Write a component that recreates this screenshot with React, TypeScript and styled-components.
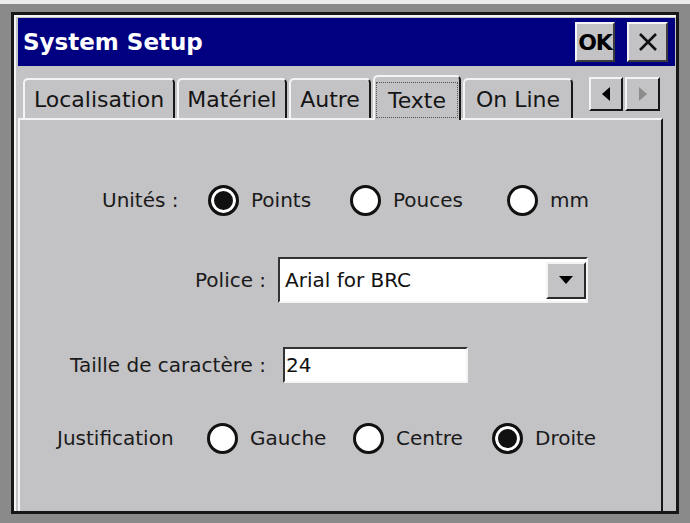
import React from "react";
import styled, { createGlobalStyle } from "styled-components";

const GlobalStyle = createGlobalStyle`
  html, body {
    margin: 0;
    padding: 0;
  }
  body {
    background: #8a8a8a;
    font-family: "DejaVu Sans", "Noto Sans", sans-serif;
  }
`;

const FACE = "#c3c2c5";
const LIGHT = "#f4f4f4";
const DARK = "#171717";

const Page = styled.div`
  width: 690px;
  height: 523px;
  box-sizing: border-box;
  border-top: 4px solid #ececec;
  padding: 8px 11px 0 11px;
`;

const Window = styled.div`
  width: 668px;
  height: 502px;
  box-sizing: border-box;
  border: 3px solid ${DARK};
  box-shadow: inset 2px 2px 0 ${LIGHT};
  background: ${FACE};
  padding: 3px 1px 0 4px;
  display: flex;
  flex-direction: column;
`;

const TitleBar = styled.div`
  height: 48px;
  flex: none;
  background: #000080;
  display: flex;
  align-items: center;
  gap: 12px;
  padding: 0 7px 0 5px;
`;

const Title = styled.div`
  flex: 1;
  color: #ffffff;
  font-weight: bold;
  font-size: 23px;
`;

const TitleButton = styled.button<{ $w: number }>`
  width: ${(p) => p.$w}px;
  height: 40px;
  box-sizing: border-box;
  padding: 0;
  background: ${FACE};
  border: 2px solid;
  border-color: ${LIGHT} #3c3c3c #3c3c3c ${LIGHT};
  display: flex;
  align-items: center;
  justify-content: center;
  font-family: inherit;
  font-weight: bold;
  font-size: 22px;
  letter-spacing: -1px;
  color: #000;
`;

const TabStrip = styled.div`
  height: 52px;
  width: 645px;
  flex: none;
  box-sizing: border-box;
  display: flex;
  align-items: flex-end;
  gap: 2px;
  padding: 0 3px 0 5px;
`;

const Tab = styled.div<{ $w: number; $active?: boolean }>`
  width: ${(p) => p.$w}px;
  height: ${(p) => (p.$active ? 45 : 40)}px;
  margin-bottom: ${(p) => (p.$active ? -2 : 0)}px;
  position: ${(p) => (p.$active ? "relative" : "static")};
  z-index: ${(p) => (p.$active ? 1 : "auto")};
  flex: none;
  box-sizing: border-box;
  background: ${FACE};
  border-top: 2px solid ${LIGHT};
  border-left: 2px solid ${LIGHT};
  border-right: 2px solid ${DARK};
  border-radius: 5px 5px 0 0;
  display: flex;
  align-items: center;
  justify-content: center;
  font-size: 22px;
  color: #151515;
  white-space: nowrap;
`;

const FocusBox = styled.span`
  align-self: stretch;
  flex: 1;
  margin: 5px 1px 2px;
  border: 1px dotted #555;
  display: flex;
  align-items: center;
  justify-content: center;
`;

const ArrowGroup = styled.div`
  margin-left: auto;
  align-self: flex-start;
  margin-top: 11px;
  display: flex;
  gap: 2px;
`;

const ArrowButton = styled.div<{ $w: number }>`
  width: ${(p) => p.$w}px;
  height: 34px;
  box-sizing: border-box;
  border: 2px solid;
  border-color: ${LIGHT} ${DARK} ${DARK} ${LIGHT};
  background: ${FACE};
  display: flex;
  align-items: center;
  justify-content: center;
`;

const Panel = styled.div`
  flex: 1;
  width: 645px;
  box-sizing: border-box;
  border-top: 2px solid ${LIGHT};
  border-left: 2px solid ${LIGHT};
  border-right: 2px solid ${DARK};
  padding-top: 40px;
  display: flex;
  flex-direction: column;
`;

const Row = styled.div<{ $h: number; $indent: number }>`
  height: ${(p) => p.$h}px;
  padding-left: ${(p) => p.$indent}px;
  display: flex;
  align-items: center;
`;

const Label = styled.span<{ $w: number }>`
  width: ${(p) => p.$w}px;
  flex: none;
  font-size: 20px;
  color: #1a1a1a;
  white-space: nowrap;
`;

const RadioOption = styled.label<{ $w?: number }>`
  width: ${(p) => (p.$w ? `${p.$w}px` : "auto")};
  flex: none;
  display: flex;
  align-items: center;
  gap: 12px;
  font-size: 20px;
  color: #1a1a1a;
  white-space: nowrap;
`;

const RadioDot = styled.span<{ $on?: boolean }>`
  width: 31px;
  height: 31px;
  flex: none;
  box-sizing: border-box;
  border-radius: 50%;
  border: 3px solid #111;
  background: ${(p) => (p.$on ? "#111" : "#fff")};
  box-shadow: ${(p) => (p.$on ? "inset 0 0 0 3px #fff" : "none")};
`;

const Sunken = styled.div<{ $w: number; $h: number }>`
  width: ${(p) => p.$w}px;
  height: ${(p) => p.$h}px;
  flex: none;
  box-sizing: border-box;
  border: 2px solid;
  border-color: #333 ${LIGHT} ${LIGHT} #333;
  background: #fff;
  display: flex;
  align-items: center;
  font-size: 20px;
  color: #111;
`;

const FieldText = styled.span<{ $pad: number }>`
  flex: 1;
  padding-left: ${(p) => p.$pad}px;
`;

const DropButton = styled.div`
  width: 40px;
  height: 37px;
  box-sizing: border-box;
  border: 2px solid;
  border-color: ${LIGHT} #2a2a2a #2a2a2a ${LIGHT};
  background: ${FACE};
  display: flex;
  align-items: center;
  justify-content: center;
`;

const Radio = ({ label, on, w }: { label: string; on?: boolean; w?: number }) => (
  <RadioOption $w={w}>
    <RadioDot $on={on} />
    {label}
  </RadioOption>
);

export default function App() {
  return (
    <>
      <GlobalStyle />
      <Page>
        <Window>
          <TitleBar>
            <Title>System Setup</Title>
            <TitleButton $w={40}>OK</TitleButton>
            <TitleButton $w={41}>
              <svg width="20" height="20" viewBox="0 0 20 20">
                <path d="M2 2 L18 18 M18 2 L2 18" stroke="#111" strokeWidth="2.6" />
              </svg>
            </TitleButton>
          </TitleBar>

          <TabStrip>
            <Tab $w={152}>Localisation</Tab>
            <Tab $w={110}>Matériel</Tab>
            <Tab $w={82}>Autre</Tab>
            <Tab $w={88} $active>
              <FocusBox>Texte</FocusBox>
            </Tab>
            <Tab $w={110}>On Line</Tab>
            <ArrowGroup>
              <ArrowButton $w={34}>
                <svg width="10" height="14" viewBox="0 0 10 14">
                  <polygon points="9,0 9,14 1,7" fill="#000" />
                </svg>
              </ArrowButton>
              <ArrowButton $w={35}>
                <svg width="10" height="14" viewBox="0 0 10 14">
                  <polygon points="1,0 1,14 9,7" fill="#8c8c8c" />
                </svg>
              </ArrowButton>
            </ArrowGroup>
          </TabStrip>

          <Panel>
            <Row $h={80} $indent={82}>
              <Label $w={106}>Unités :</Label>
              <Radio label="Points" on w={142} />
              <Radio label="Pouces" w={157} />
              <Radio label="mm" />
            </Row>

            <Row $h={80} $indent={175}>
              <Label $w={83}>Police :</Label>
              <Sunken $w={310} $h={46}>
                <FieldText $pad={5}>Arial for BRC</FieldText>
                <DropButton>
                  <svg width="14" height="8" viewBox="0 0 14 8">
                    <polygon points="0,0 14,0 7,8" fill="#000" />
                  </svg>
                </DropButton>
              </Sunken>
            </Row>

            <Row $h={90} $indent={50}>
              <Label $w={213}>Taille de caractère :</Label>
              <Sunken $w={185} $h={36}>
                <FieldText $pad={1}>24</FieldText>
              </Sunken>
            </Row>

            <Row $h={56} $indent={37}>
              <Label $w={150}>Justification</Label>
              <Radio label="Gauche" w={146} />
              <Radio label="Centre" w={139} />
              <Radio label="Droite" on />
            </Row>
          </Panel>
        </Window>
      </Page>
    </>
  );
}
